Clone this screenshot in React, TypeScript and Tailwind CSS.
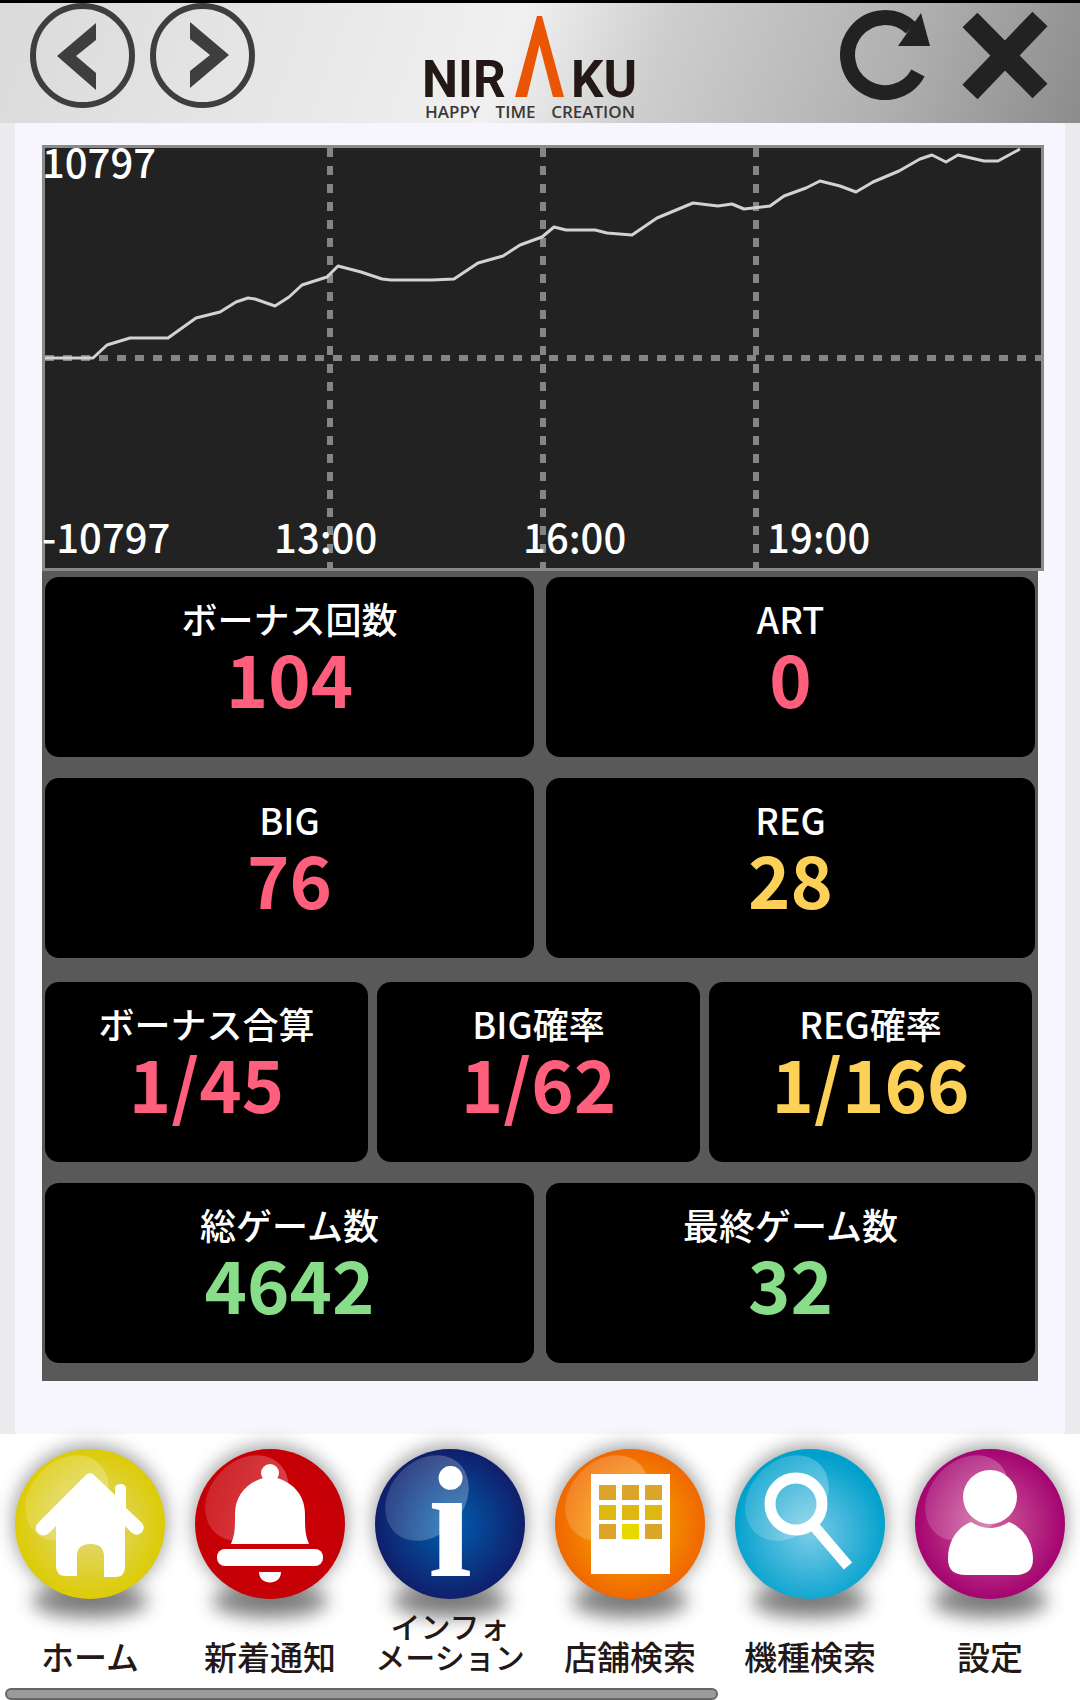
import type { ReactNode } from "react";

type Tone = "pink" | "yellow" | "green";

const tones: Record<Tone, string> = {
  pink: "text-[#ff5f7d]",
  yellow: "text-[#fdd157]",
  green: "text-[#87dd88]",
};

type Stat = { label: string; value: string; tone: Tone };

const bonus: Stat[] = [
  { label: "ボーナス回数", value: "104", tone: "pink" },
  { label: "ART", value: "0", tone: "pink" },
];

const counts: Stat[] = [
  { label: "BIG", value: "76", tone: "pink" },
  { label: "REG", value: "28", tone: "yellow" },
];

const odds: Stat[] = [
  { label: "ボーナス合算", value: "1/45", tone: "pink" },
  { label: "BIG確率", value: "1/62", tone: "pink" },
  { label: "REG確率", value: "1/166", tone: "yellow" },
];

const games: Stat[] = [
  { label: "総ゲーム数", value: "4642", tone: "green" },
  { label: "最終ゲーム数", value: "32", tone: "green" },
];

// medal balance over the day, in chart units (996 x 420, zero line at 210)
const series =
  "0,210 48,210 62,197 85,190 123,190 151,170 175,164 191,154 203,150 210,151 230,158 244,149 257,137 282,129 293,118 316,124 337,131 346,132 387,132 409,131 433,115 458,108 475,97 497,89 509,79 521,82 550,82 562,85 587,87 612,70 648,55 673,58 687,56 699,61 725,58 739,48 761,40 775,33 795,38 811,44 828,34 854,23 875,11 887,7 901,14 913,7 939,13 953,13 975,1";

function Chart() {
  return (
    <div className="relative border-[3px] border-[#8a8a88] bg-[#222] text-[40px] font-medium leading-[36px] text-white">
      <svg viewBox="0 0 996 420" className="block h-auto w-full" role="img" aria-label="差枚数グラフ">
        <g stroke="#858585" strokeWidth="6" strokeDasharray="9 9">
          <path d="M0 210H996" />
          <path d="M285 0V420" />
          <path d="M498 0V420" />
          <path d="M711 0V420" />
        </g>
        <polyline points={series} fill="none" stroke="#d2d2d2" strokeWidth="3" strokeLinejoin="round" />
      </svg>
      <span className="absolute -left-[3px] -top-[5px]">10797</span>
      <span className="absolute -left-[3px] bottom-[14px]">-10797</span>
      <span className="absolute left-[23%] bottom-[14px]">13:00</span>
      <span className="absolute left-[48%] bottom-[14px]">16:00</span>
      <span className="absolute left-[72.5%] bottom-[14px]">19:00</span>
    </div>
  );
}

function Card({ label, value, tone }: Stat) {
  return (
    <div className="flex h-[180px] flex-col items-center rounded-[14px] bg-black pt-[14px]">
      <dt className="text-[36px] font-medium leading-[54px] text-white">{label}</dt>
      <dd className={`text-[72px] font-bold leading-[64px] ${tones[tone]}`}>{value}</dd>
    </div>
  );
}

function Stats() {
  return (
    <dl className="mr-[6px] bg-[#595959] px-[3px] pb-[18px] pt-[6px]">
      <div className="grid grid-cols-2 gap-x-3 gap-y-[21px]">
        {[...bonus, ...counts].map((s) => (
          <Card key={s.label} {...s} />
        ))}
      </div>
      <div className="mb-[21px] mt-6 grid grid-cols-3 gap-[9px] pr-[3px]">
        {odds.map((s) => (
          <Card key={s.label} {...s} />
        ))}
      </div>
      <div className="grid grid-cols-2 gap-3">
        {games.map((s) => (
          <Card key={s.label} {...s} />
        ))}
      </div>
    </dl>
  );
}

function Logo() {
  return (
    <div className="w-[210px] text-[#3c3838]">
      <svg viewBox="0 0 210 84" className="block w-full overflow-visible font-['Roboto',sans-serif] font-bold" role="img" aria-label="NIRAKU">
        <g fill="#231815" fontSize="51">
          <text x="-3" y="82">NIR</text>
          <text x="212" y="82" textAnchor="end">KU</text>
        </g>
        <path d="M90 82 112 1h5l22 81h-11L114.500 30 102 82z" fill="#ea5504" />
      </svg>
      <div className="mt-1 flex justify-between font-['Open_Sans',sans-serif] text-[17px] font-semibold leading-[18px]">
        <span>HAPPY</span>
        <span>TIME</span>
        <span>CREATION</span>
      </div>
    </div>
  );
}

function Header() {
  return (
    <header className="flex h-[123px] items-start border-t-[3px] border-black bg-[linear-gradient(110deg,#dadada_0%,#e6e6e6_25%,#f0f0f0_47%,#cecece_60%,#b0b0b0_82%,#8c8c8c_100%)] pl-[30px] pr-8">
      <div className="flex flex-[22] gap-[15px]">
        <button type="button" aria-label="戻る">
          <svg viewBox="0 0 105 105" className="block h-[105px] w-[105px]" fill="#3e3e3e">
            <circle cx="52.500" cy="52.500" r="49.500" fill="none" stroke="#3e3e3e" strokeWidth="6" />
            <path d="M66 20v17L46 53l20 17v17L27 53z" />
          </svg>
        </button>
        <button type="button" aria-label="進む">
          <svg viewBox="0 0 105 105" className="block h-[105px] w-[105px]" fill="#3e3e3e">
            <circle cx="52.500" cy="52.500" r="49.500" fill="none" stroke="#3e3e3e" strokeWidth="6" />
            <path d="M40 19v17l20 16-20 16v17l39-33z" />
          </svg>
        </button>
      </div>
      <div className="pt-3">
        <Logo />
      </div>
      <div className="flex flex-[23] justify-end gap-8 pt-[7px]">
        <button type="button" aria-label="更新">
          <svg viewBox="0 0 90 90" className="block h-[90px] w-[90px]">
            <path d="M78 63A37.500 37.500 0 1 1 71 18" fill="none" stroke="#222" strokeWidth="15" />
            <path d="M81 3l9 33H58z" fill="#222" />
          </svg>
        </button>
        <button type="button" aria-label="閉じる">
          <svg viewBox="0 0 86 90" className="block h-[90px] w-[86px]">
            <path d="M8 10 78 81M78 9 8 82" stroke="#222" strokeWidth="21" />
          </svg>
        </button>
      </div>
    </header>
  );
}

function Ball({ id, from, to, at = "50%", children }: { id: string; from: string; to: string; at?: string; children: ReactNode }) {
  return (
    <svg viewBox="0 0 180 180" className="block w-full overflow-visible" aria-hidden>
      <defs>
        <radialGradient id={id} cx="50%" cy={at} r="52%">
          <stop offset="0" stopColor={from} />
          <stop offset="1" stopColor={to} />
        </radialGradient>
        <linearGradient id={`${id}-gloss`} x1="0" y1="0" x2="0.6" y2="1">
          <stop offset="0" stopColor="#fff" stopOpacity="0.12" />
          <stop offset="1" stopColor="#fff" stopOpacity="0.26" />
        </linearGradient>
        <filter id={`${id}-blur`} x="-30%" y="-80%" width="160%" height="260%">
          <feGaussianBlur stdDeviation="9" />
        </filter>
      </defs>
      <ellipse cx="90" cy="167" rx="58" ry="17" fill="#444" opacity="0.65" filter={`url(#${id}-blur)`} />
      <circle cx="90" cy="88" r="77" fill="#555" opacity="0.55" filter={`url(#${id}-blur)`} />
      <circle cx="90" cy="90" r="75" fill={`url(#${id})`} />
      <ellipse cx="67" cy="64" rx="47" ry="37" fill={`url(#${id}-gloss)`} transform="rotate(-48 67 64)" />
      {children}
    </svg>
  );
}

const tabs = [
  {
    label: ["ホーム"],
    icon: (
      <Ball id="home" from="#e2da86" to="#dccb00">
        <path
          d="M86 41q4-4 8 0l21 20v-6q0-5 5.500-5t5.500 5v19l15 14q5 5 1 10t-10 1l-7-7v41q0 10-10 10h-11v-20q0-13-13.500-13T77 122v20H66q-10 0-10-10V92l-7 7q-6 5-11 0t1-11z"
          fill="#fff"
        />
      </Ball>
    ),
  },
  {
    label: ["新着通知"],
    icon: (
      <Ball id="news" from="#d00008" to="#c40006">
        <g fill="#fff">
          <circle cx="90" cy="39" r="9" />
          <path d="M83 44h14c17 5 28 18 28 36 0 14 0 20 4 30H51c4-10 4-16 4-30 0-18 11-31 28-36z" />
          <rect x="37" y="115" width="106" height="17" rx="8" />
          <path d="M79 138h22c0 14-22 14-22 0z" />
        </g>
      </Ball>
    ),
  },
  {
    label: ["インフォ", "メーション"],
    icon: (
      <Ball id="info" from="#0060b0" to="#101c68">
        <text x="90" y="142" textAnchor="middle" fontSize="159" fill="#fff" className="font-['Liberation_Serif',serif] font-bold">
          i
        </text>
      </Ball>
    ),
  },
  {
    label: ["店舗検索"],
    icon: (
      <Ball id="shop" from="#f6b400" to="#f06400">
        <path d="M51 40h79v100H51z" fill="#fff" />
        {[51, 71, 90].map((y) =>
          [59, 82, 105].map((x) => (
            <rect key={`${x}-${y}`} x={x} y={y} width="17" height="15" fill={x === 82 && y === 90 ? "#e8d800" : y === 71 ? "#deb810" : "#dca428"} />
          ))
        )}
      </Ball>
    ),
  },
  {
    label: ["機種検索"],
    icon: (
      <Ball id="model" from="#7ccbe8" to="#00a0cc" at="56%">
        <g fill="none" stroke="#fff">
          <circle cx="76" cy="70" r="26" strokeWidth="11" />
          <path d="M93 91l35 41" strokeWidth="11" />
        </g>
      </Ball>
    ),
  },
  {
    label: ["設定"],
    icon: (
      <Ball id="settings" from="#d2609e" to="#a2006e">
        <g fill="#fff">
          <circle cx="90" cy="63" r="27" />
          <path d="M71 88q19 12 38 0c15 6 24 20 24 37 0 11-6 16-18 16H66c-12 0-18-5-18-16 0-17 8-31 23-37z" />
        </g>
      </Ball>
    ),
  },
];

function TabBar() {
  return (
    <nav className="bg-white">
      <div className="grid grid-cols-6">
        {tabs.map(({ label, icon }) => (
          <a key={label[0]} href="#" className="text-center font-medium text-[#231815]">
            {icon}
            <span className={`relative flex h-[58px] flex-col justify-end leading-[31px] ${label.length > 1 ? "text-[30px]" : "text-[33px]"}`}>
              {label.map((line) => (
                <span key={line} className="whitespace-nowrap">
                  {line}
                </span>
              ))}
            </span>
          </a>
        ))}
      </div>
      <div className="ml-[5px] mt-4 h-3 w-[66%] rounded-full border-2 border-[#666] bg-[#9b9b9b]" />
    </nav>
  );
}

export default function App() {
  return (
    <div className="bg-white font-['Noto_Sans_CJK_JP',sans-serif]">
      <Header />
      <main className="border-x-[15px] border-[#ececee] bg-[#f7f6ff] pb-[53px] pl-[27px] pr-[21px] pt-[22px]">
        <Chart />
        <Stats />
      </main>
      <TabBar />
    </div>
  );
}
